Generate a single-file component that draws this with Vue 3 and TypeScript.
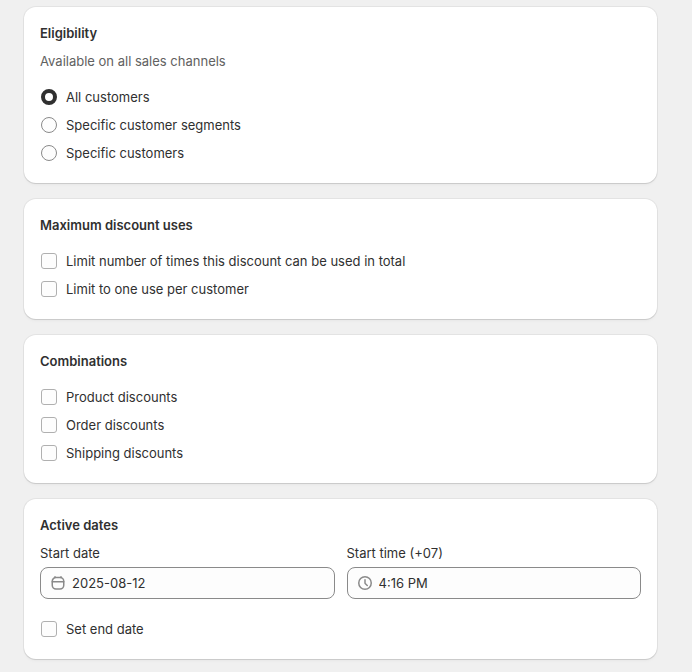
<script setup lang="ts">
import { ref } from 'vue'

interface Option {
  id: string
  label: string
}

interface OptionGroup {
  title: string
  options: Option[]
}

const audiences: Option[] = [
  { id: 'all', label: 'All customers' },
  { id: 'segments', label: 'Specific customer segments' },
  { id: 'specific', label: 'Specific customers' },
]

const groups: OptionGroup[] = [
  {
    title: 'Maximum discount uses',
    options: [
      { id: 'limit-total', label: 'Limit number of times this discount can be used in total' },
      { id: 'limit-customer', label: 'Limit to one use per customer' },
    ],
  },
  {
    title: 'Combinations',
    options: [
      { id: 'product', label: 'Product discounts' },
      { id: 'order', label: 'Order discounts' },
      { id: 'shipping', label: 'Shipping discounts' },
    ],
  },
]

const audience = ref('all')
const checked = ref<string[]>([])
const startDate = ref('2025-08-12')
const startTime = ref('4:16 PM')
const hasEndDate = ref(false)
</script>

<template>
  <main class="page">
    <section class="card">
      <h2 class="title">Eligibility</h2>
      <p class="hint">Available on all sales channels</p>
      <div class="choices" role="radiogroup" aria-label="Eligibility">
        <label v-for="option in audiences" :key="option.id" class="choice">
          <input v-model="audience" class="control radio" type="radio" name="audience" :value="option.id" />
          <span>{{ option.label }}</span>
        </label>
      </div>
    </section>

    <section v-for="group in groups" :key="group.title" class="card">
      <h2 class="title">{{ group.title }}</h2>
      <div class="choices">
        <label v-for="option in group.options" :key="option.id" class="choice">
          <input v-model="checked" class="control checkbox" type="checkbox" :value="option.id" />
          <span>{{ option.label }}</span>
        </label>
      </div>
    </section>

    <section class="card">
      <h2 class="title">Active dates</h2>
      <div class="fields">
        <div class="field">
          <label for="start-date">Start date</label>
          <div class="box">
            <svg class="icon" viewBox="0 0 20 20" aria-hidden="true">
              <rect x="4.25" y="4.5" width="11.5" height="11.5" rx="3.75" />
              <path d="M4.25 8.75h11.5M7 3.75v.75M13 3.75v.75" />
            </svg>
            <input id="start-date" v-model="startDate" class="text" type="text" />
          </div>
        </div>
        <div class="field">
          <label for="start-time">Start time (+07)</label>
          <div class="box">
            <svg class="icon" viewBox="0 0 20 20" aria-hidden="true">
              <circle cx="10" cy="10" r="6.25" />
              <path d="M10 6.75v3.34c0 .13.05.26.15.35l2.1 2.1" />
            </svg>
            <input id="start-time" v-model="startTime" class="text" type="text" />
          </div>
        </div>
      </div>
      <label class="choice end-date">
        <input v-model="hasEndDate" class="control checkbox" type="checkbox" />
        <span>Set end date</span>
      </label>
    </section>
  </main>
</template>

<style>
body {
  margin: 0;
  background: #f0f0f0;
}
</style>

<style scoped>
.page {
  display: flex;
  flex-direction: column;
  gap: 16px;
  padding: 7px 35px 13px 24px;
  color: #303030;
  font: 400 13px/20px Inter, "Liberation Sans", sans-serif;
}

.card {
  padding: 16px;
  border-radius: 12px;
  background: #fff;
  box-shadow:
    0 0 0 1px rgba(0, 0, 0, 0.05),
    0 1px 1px rgba(0, 0, 0, 0.1),
    0 3px 3px rgba(0, 0, 0, 0.02);
}

.title {
  margin: 0;
  font-size: 13px;
  font-weight: 600;
}

.hint {
  margin: 8px 0 0;
  color: #616161;
}

.choices {
  display: flex;
  flex-direction: column;
  align-items: flex-start;
  margin-top: 12px;
}

.choice {
  display: flex;
  align-items: center;
  gap: 9px;
  padding: 4px 1px;
}

.control {
  appearance: none;
  box-sizing: border-box;
  flex: none;
  width: 16px;
  height: 16px;
  margin: 0;
  border: 1px solid #8a8a8a;
  background: #fdfdfd;
}

.radio {
  border-radius: 50%;
}

.radio:checked {
  border: 4px solid #303030;
  background: #fff;
}

.checkbox {
  border-color: #b0b0b0;
  border-radius: 3px;
}

.checkbox:checked {
  border: 4px solid #303030;
}

.fields {
  display: grid;
  grid-template-columns: 1fr 1fr;
  gap: 12px;
  margin-top: 8px;
}

.field {
  display: flex;
  flex-direction: column;
  gap: 4px;
}

.box {
  display: flex;
  align-items: center;
  gap: 4px;
  box-sizing: border-box;
  height: 32px;
  padding: 0 7px;
  border: 1px solid #8a8a8a;
  border-radius: 8px;
  background: #fdfdfd;
}

.icon {
  flex: none;
  width: 20px;
  height: 20px;
  fill: none;
  stroke: #8a8a8a;
  stroke-width: 1.5;
  stroke-linecap: round;
}

.text {
  flex: 1;
  min-width: 0;
  padding: 0;
  border: 0;
  outline: 0;
  background: transparent;
  color: inherit;
  font: inherit;
}

.end-date {
  width: fit-content;
  margin-top: 16px;
}
</style>
